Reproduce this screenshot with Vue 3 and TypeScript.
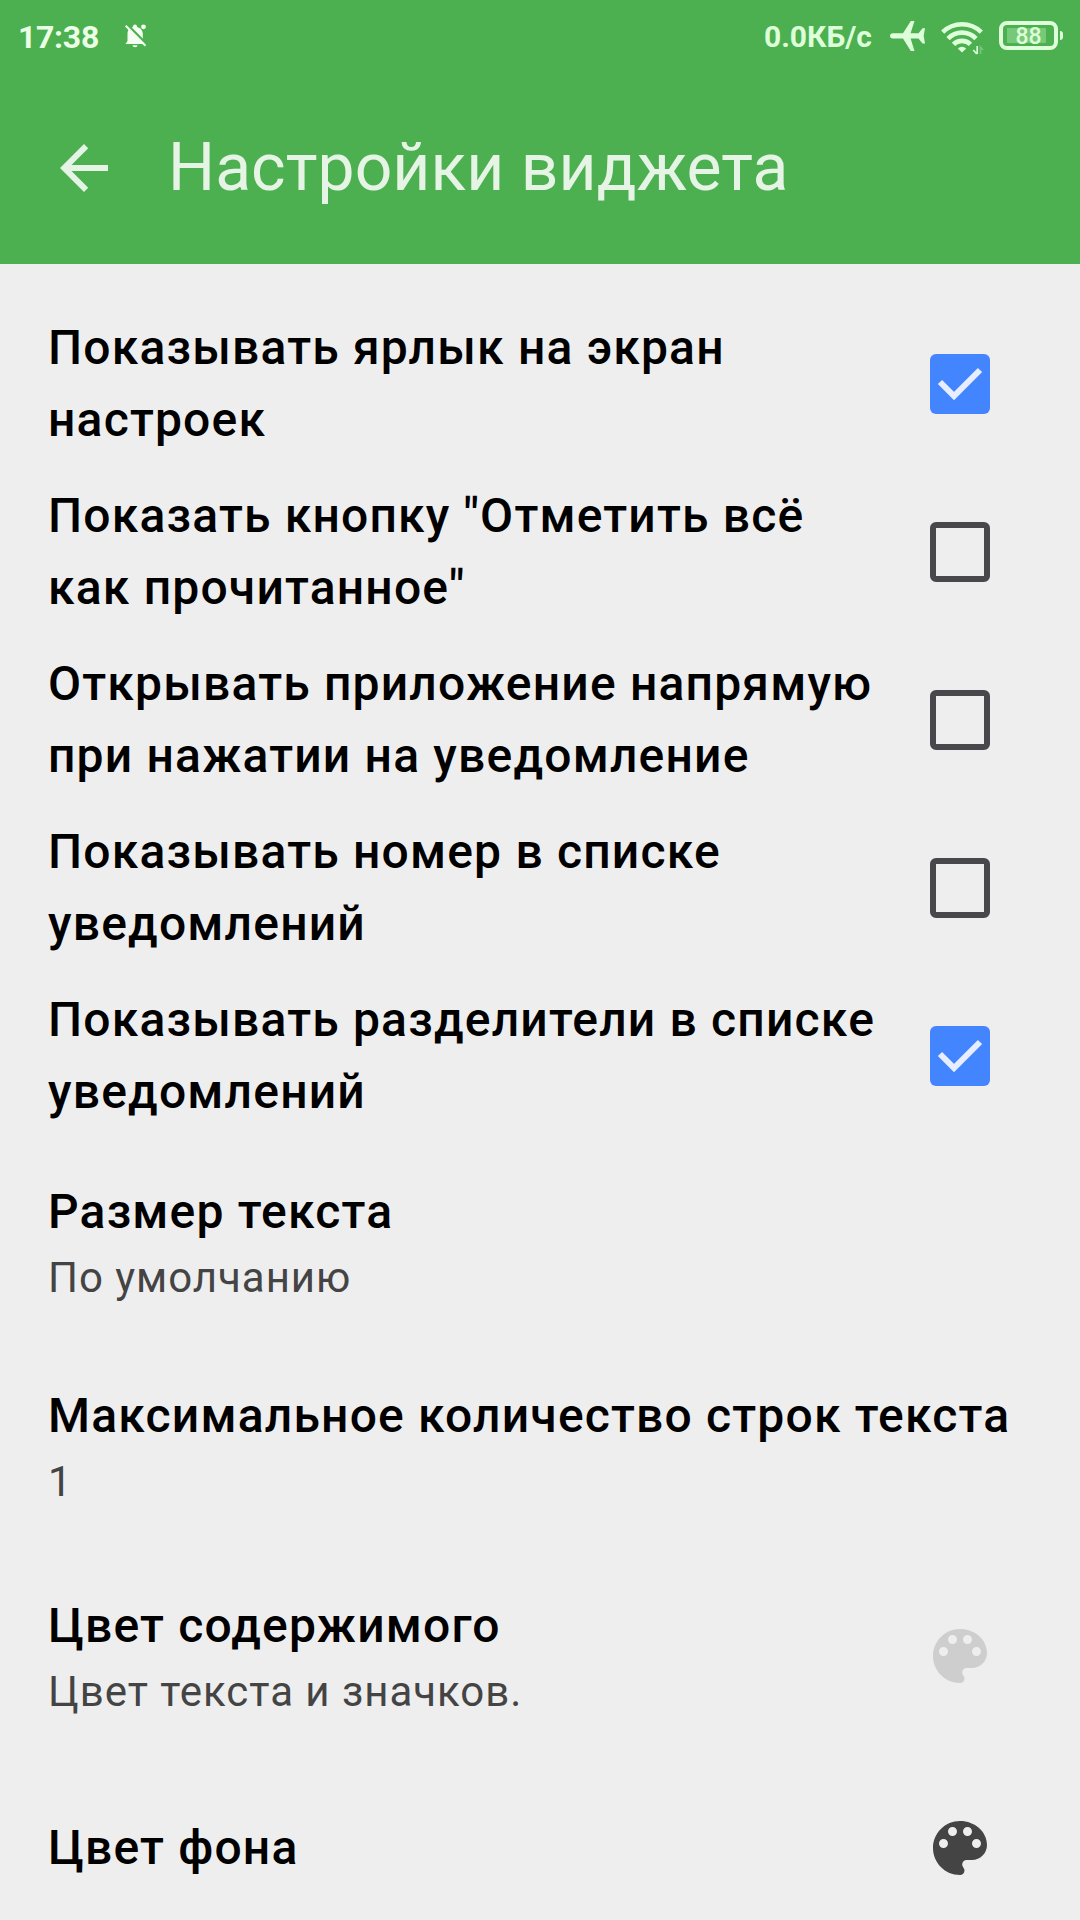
<script setup lang="ts">
interface Toggle { lines: string[]; checked: boolean }
interface Choice { title: string; summary?: string; swatch?: string }

const toggles: Toggle[] = [
  { lines: ['Показывать ярлык на экран', 'настроек'], checked: true },
  { lines: ['Показать кнопку "Отметить всё', 'как прочитанное"'], checked: false },
  { lines: ['Открывать приложение напрямую', 'при нажатии на уведомление'], checked: false },
  { lines: ['Показывать номер в списке', 'уведомлений'], checked: false },
  { lines: ['Показывать разделители в списке', 'уведомлений'], checked: true },
]

const choices: Choice[] = [
  { title: 'Размер текста', summary: 'По умолчанию' },
  { title: 'Максимальное количество строк текста', summary: '1' },
  { title: 'Цвет содержимого', summary: 'Цвет текста и значков.', swatch: '#cecece' },
  { title: 'Цвет фона', swatch: '#444444' },
]
</script>

<template>
  <div class="screen">
    <header class="header">
      <div class="status">
        <span class="clock">17:38</span>
        <svg class="bell" width="22" height="24" viewBox="0 0 22 24">
          <path d="M10 0.500a2 2 0 0 1 2 2v.5c3.700.8 5.800 3.400 5.800 7v6.500l2.200 3.500H0.500l2-3v-7c0-3.600 1.600-6.200 5.500-7v-.5a2 2 0 0 1 2-2zM7.500 21.300h5a2.500 2 0 0 1-5 0z" fill="#f4fff2" />
          <path d="M1.500 0L22.500 21" stroke="#4caf50" stroke-width="2.600" />
          <path d="M0.700 1.700L20.500 21.800" stroke="#f4fff2" stroke-width="2" />
          <circle cx="18.500" cy="2.800" r="2.400" fill="#f4fff2" />
        </svg>
        <span class="fill" />
        <span class="speed">0.0КБ/с</span>
        <svg class="plane" width="36" height="32" viewBox="0 0 36 32">
          <path d="M2.700 13.200H13L20.800 1H24.500L20.600 13.200H28.500L32.500 8.300H35L33.700 15.700L35 23.500H32.500L28.500 18.500H20.600L24.500 31H20.800L13 18.500H2.700a2.600 2.600 0 0 1 0-5.300z" fill="#ddffd9" />
        </svg>
        <svg class="wifi" width="44" height="34" viewBox="0 0 44 34">
          <g fill="none" stroke="#ddffd9" stroke-width="4.600">
            <path d="M1.700 11.200a27.500 27.500 0 0 1 38.600 0" />
            <path d="M7 17.600a19.500 19.500 0 0 1 28 0" />
            <path d="M12.500 23.400a12 12 0 0 1 17 0" />
          </g>
          <path d="M16.800 27.500q4.200-3.500 8.400 0L21 31.500z" fill="#ddffd9" />
          <path d="M36.200 25v8M35.800 33l-3.500-4" fill="none" stroke="#ddffd9" stroke-width="1.700" />
          <path d="M39.500 33v-7l2.500 3" fill="none" stroke="#76c678" stroke-width="1.700" />
        </svg>
        <div class="battery"><div class="cell"><span class="charge" /><span class="level">88</span></div><span class="tip" /></div>
      </div>
      <div class="bar">
        <svg class="back" width="48" height="48" viewBox="0 0 16 16">
          <path d="M16 7H3.830l5.590-5.590L8 0 0 8l8 8 1.410-1.410L3.830 9H16z" fill="#e6f4e6" />
        </svg>
        <h1>Настройки виджета</h1>
      </div>
    </header>

    <main>
      <div v-for="(item, i) in toggles" :key="i" class="row toggle">
        <div class="text"><div v-for="line in item.lines" :key="line" class="title">{{ line }}</div></div>
        <span class="box" :class="{ checked: item.checked }">
          <svg v-if="item.checked" width="60" height="60" viewBox="0 0 60 60">
            <path d="M10 28L24 42L50 16" fill="none" stroke="#e6eeff" stroke-width="6" />
          </svg>
        </span>
      </div>
      <div v-for="item in choices" :key="item.title" class="row choice" :class="{ tinted: item.swatch }">
        <div class="text">
          <div class="title">{{ item.title }}</div>
          <div v-if="item.summary" class="summary">{{ item.summary }}</div>
        </div>
        <svg v-if="item.swatch" class="palette" width="54" height="54" viewBox="3 3 18 18">
          <path :fill="item.swatch" d="M12 3c-4.970 0-9 4.030-9 9s4.030 9 9 9c.83 0 1.500-.67 1.500-1.500 0-.39-.15-.74-.39-1.010-.23-.26-.38-.61-.38-.99 0-.83.67-1.500 1.500-1.500H16c2.760 0 5-2.240 5-5 0-4.420-4.030-8-9-8zm-5.500 9c-.83 0-1.500-.67-1.500-1.500S5.670 9 6.500 9 8 9.670 8 10.500 7.330 12 6.500 12zm3-4C8.670 8 8 7.330 8 6.500S8.670 5 9.500 5s1.500.67 1.500 1.500S10.330 8 9.500 8zm5 0c-.83 0-1.500-.67-1.500-1.500S13.670 5 14.500 5s1.500.67 1.500 1.500S15.330 8 14.500 8zm3 4c-.83 0-1.500-.67-1.500-1.500S16.670 9 17.500 9s1.500.67 1.500 1.500-.67 1.500-1.500 1.500z" />
        </svg>
      </div>
    </main>
  </div>
</template>

<style>
body { background: #eeeeee; overflow: hidden; }
</style>

<style scoped>
.screen { width: 1080px; height: 1920px; overflow: hidden; background: #eeeeee; font-family: Roboto, "Noto Sans", sans-serif; box-sizing: border-box; }
.header { height: 264px; background: #4caf50; }
.status { display: flex; height: 72px; align-items: center; padding: 0 17px 0 18px; box-sizing: border-box; color: #ddffd9; }
.clock { font-size: 32px; font-weight: 700; line-height: 72px; width: 107px; padding-top: 1px; letter-spacing: -0.3px; white-space: nowrap; color: #eaffe6; }
.bell { margin-bottom: 1px; }
.fill { flex: 1; }
.speed { font-size: 30px; font-weight: 700; white-space: nowrap; padding-top: 1px; }
.plane { margin-left: 18px; }
.wifi { margin: 3px 0 0 15px; }
.battery { display: flex; align-items: center; margin-left: 14px; margin-bottom: 1px; }
.cell { position: relative; width: 59px; height: 29px; box-sizing: border-box; border: 4px solid #ddffd9; border-radius: 8px; display: flex; align-items: center; justify-content: center; }
.charge { position: absolute; left: 4px; top: 3px; width: 39px; height: 15px; background: #76c976; }
.level { position: relative; font-size: 23px; font-weight: 500; line-height: 23px; padding-top: 2px; }
.tip { width: 3px; height: 9px; margin-left: 2px; background: #ddffd9; border-radius: 0 3px 3px 0; }
.bar { display: flex; height: 192px; align-items: center; padding-left: 60px; }
h1 { margin: 0 0 0 60px; font-size: 66px; font-weight: 400; line-height: 84px; letter-spacing: 0.06px; white-space: nowrap; color: #e6f4e6; }
main { padding-top: 36px; }
.row { display: flex; align-items: center; justify-content: space-between; box-sizing: border-box; padding: 0 90px 0 48px; }
.toggle { height: 168px; }
.choice { height: 204px; }
.tinted { height: 216px; padding-right: 93px; }
.tinted:last-child { height: 168px; }
.title { font-size: 48px; font-weight: 500; line-height: 72px; letter-spacing: 1.19px; white-space: nowrap; color: #000; }
.summary { font-size: 42px; line-height: 60px; letter-spacing: 0.97px; white-space: nowrap; color: #444; }
.box { width: 60px; height: 60px; box-sizing: border-box; flex: none; border: 6px solid #48484c; border-radius: 6px; }
.box.checked { border: 0; background: #4285ff; }
.box svg, .palette { display: block; flex: none; }
</style>
